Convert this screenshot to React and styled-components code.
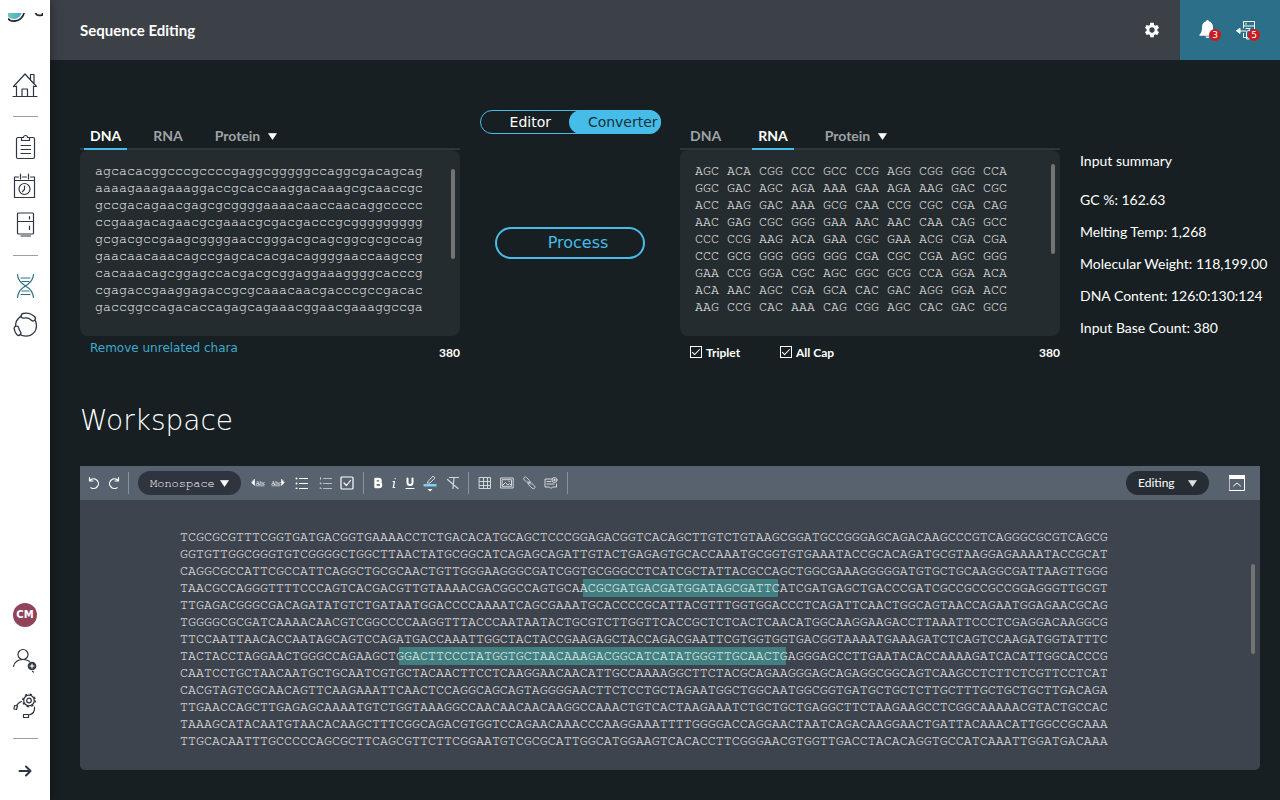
import React from "react";
import styled, { createGlobalStyle, css } from "styled-components";

const lato = `Lato, "Open Sans", sans-serif`;
const dejavu = `"DejaVu Sans", Verdana, sans-serif`;
const mono = `FreeMono, "Liberation Mono", monospace`;

const GlobalStyle = createGlobalStyle`
  *, *::before, *::after { box-sizing: border-box; }
  body { margin: 0; background: #171f22; color: #fff; font-family: ${lato}; }
  button, input, select, textarea { font: inherit; color: inherit; }
  button { background: none; border: 0; padding: 0; cursor: pointer; }
  svg { display: block; flex: none; }
`;

const Page = styled.div`
  display: flex;
  min-height: 100vh;
`;

const Sidebar = styled.nav`
  position: relative;
  z-index: 1;
  flex: 0 0 50px;
  display: flex;
  flex-direction: column;
  justify-content: space-between;
  align-items: center;
  padding: 13px 0 16px;
  background: #fff;
  color: #2f3542;
  box-shadow: 0 0 10px rgba(0, 0, 0, 0.4);
`;

const SideGroup = styled.div`
  display: flex;
  flex-direction: column;
  align-items: center;
  gap: ${(p) => p.$gap}px;
`;

const Logo = styled.a`
  height: 10px;
  margin-bottom: 37px;
`;

const SideLink = styled.a`
  display: grid;
  place-items: center;
  width: 26px;
  height: 26px;
  color: ${(p) => (p.$active ? "#2c7389" : "inherit")};
`;

const SideRule = styled.hr`
  width: 25px;
  margin: ${(p) => p.$space || 0}px 0;
  border: 0;
  border-top: 1px solid #9aa0a8;
`;

const Avatar = styled.button`
  width: 24px;
  height: 24px;
  margin-bottom: 2px;
  border-radius: 50%;
  background: #91435a;
  color: #fff;
  font: 700 10px/24px ${dejavu};
  text-align: center;
`;

const Main = styled.div`
  flex: 1;
  min-width: 0;
`;

const Header = styled.header`
  display: flex;
  align-items: center;
  height: 60px;
  padding-left: 30px;
  background: #3c4047;
`;

const Title = styled.h1`
  flex: 1;
  margin: 0;
  font-size: 15px;
  line-height: 20px;
  font-weight: 700;
`;

const SettingsButton = styled.button`
  display: grid;
  place-items: center;
  width: 56px;
  height: 60px;
`;

const Alerts = styled.div`
  display: flex;
  align-items: center;
  justify-content: center;
  gap: 17px;
  width: 100px;
  height: 60px;
  padding-right: 5px;
  background: #2b7088;
`;

const AlertButton = styled.button`
  position: relative;
  width: 22px;
  height: 22px;
`;

const Badge = styled.span`
  position: absolute;
  right: -2px;
  bottom: 0;
  width: 12px;
  height: 12px;
  border-radius: 50%;
  background: #cb1b20;
  font: 9px/12px ${dejavu};
  text-align: center;
`;

const Converter = styled.section`
  display: grid;
  grid-template-columns: minmax(0, 1fr) 220px minmax(0, 1fr) 220px;
  align-items: start;
  padding: 50px 0 0 30px;
`;

const Panel = styled.div`
  padding-top: 12px;
`;

const Tabs = styled.div`
  display: flex;
  height: 28px;
  padding-left: 4px;
  border-bottom: 2px solid #2e353e;
`;

const Tab = styled.button`
  display: flex;
  align-items: center;
  height: 28px;
  margin-right: ${(p) => p.$after || 0}px;
  padding: 0 6px;
  gap: 8px;
  border-bottom: 2px solid ${(p) => (p.$active ? "#46bde8" : "transparent")};
  color: ${(p) => (p.$active ? "#fff" : "#9fa3a5")};
  font-size: 14px;
  font-weight: 700;
  svg { margin-top: 3px; }
`;

const SequenceBox = styled.div`
  display: flex;
  height: 186px;
  padding: 13px 5px 12px 15px;
  border-radius: 8px;
  background: #242c2f;
`;

const SequenceInput = styled.textarea`
  flex: 1;
  min-width: 0;
  padding: 0;
  border: 0;
  outline: 0;
  resize: none;
  overflow: hidden;
  background: none;
  color: #fff;
  font: 10pt/17px ${mono};
  white-space: pre;
`;

const ScrollThumb = styled.div`
  flex: none;
  width: 4px;
  height: 90px;
  margin-top: ${(p) => p.$top}px;
  border-radius: 2px;
  background: #737373;
`;

const PanelFooter = styled.div`
  display: flex;
  align-items: center;
  height: 32px;
  padding-left: 10px;
  font-size: 12px;
  font-weight: 700;
`;

const RemoveLink = styled.a`
  align-self: flex-start;
  flex: 1;
  margin-top: 3px;
  color: #3fa9cd;
  font: 12px/18px ${dejavu};
  text-decoration: none;
`;

const CheckLabel = styled.label`
  display: flex;
  align-items: center;
  gap: 4px;
  width: 90px;
`;

const Check = styled.input`
  appearance: none;
  width: 12px;
  height: 12px;
  margin: 0;
  border: 1px solid #fff;
  display: grid;
  place-items: center;
  &:checked::after {
    content: "";
    width: 8px;
    height: 4px;
    border: solid #fff;
    border-width: 0 0 1px 1px;
    transform: translateY(-1px) rotate(-45deg);
  }
`;

const Count = styled.output`
  margin-left: auto;
`;

const Middle = styled.div`
  display: flex;
  flex-direction: column;
  align-items: center;
`;

const Switch = styled.div`
  display: grid;
  grid-template-columns: 1fr 1fr;
  width: 181px;
  height: 24px;
  border: 1px solid #46bde8;
  border-radius: 12px;
`;

const SwitchOption = styled.button`
  height: 24px;
  margin: -1px;
  padding-left: ${(p) => (p.$active ? 16 : 10)}px;
  border-radius: 12px;
  font: 14px/24px ${dejavu};
  ${(p) =>
    p.$active &&
    css`
      background: #46bde8;
      color: #17303a;
    `}
`;

const ProcessButton = styled.button`
  width: 150px;
  height: 32px;
  margin-top: 93px;
  padding-left: 16px;
  border: 2px solid #46bde8;
  border-radius: 16px;
  color: #46bde8;
  font: 16px/28px ${dejavu};
`;

const Summary = styled.div`
  padding: 40px 0 0 20px;
  font-size: 14px;
  line-height: 22px;
  white-space: nowrap;
`;

const SummaryTitle = styled.h2`
  margin: 0 0 17px;
  font: inherit;
`;

const SummaryList = styled.ul`
  display: grid;
  gap: 10px;
  margin: 0;
  padding: 0;
  list-style: none;
`;

const Workspace = styled.section`
  padding: 0 20px 30px 30px;
`;

const WorkspaceTitle = styled.h2`
  margin: 34px 0 26px;
  font: 200 28px/38px ${dejavu};
`;

const Toolbar = styled.div`
  display: flex;
  align-items: center;
  height: 34px;
  padding: 0 15px 0 4px;
  background: #58616e;
`;

const Tool = styled.button`
  display: grid;
  place-items: center;
  width: ${(p) => p.$w || 22}px;
  height: 22px;
  color: ${(p) => (p.$bright ? "#fff" : "#d3d6da")};
`;

const ToolRule = styled.span`
  width: 1px;
  height: 22px;
  margin: 0 ${(p) => p.$after || 0}px 0 ${(p) => p.$before || 0}px;
  background: #8b919b;
`;

const Picker = styled.span`
  display: grid;
  align-items: center;
  width: ${(p) => p.$w}px;
  height: 24px;
  margin-right: ${(p) => p.$after}px;
  border-radius: 12px;
  background: ${(p) => p.$bg};
  > * { grid-area: 1 / 1; }
  > svg { justify-self: end; margin-right: 12px; pointer-events: none; }
`;

const PickerSelect = styled.select`
  appearance: none;
  width: 100%;
  height: 24px;
  padding: 0 0 0 12px;
  border: 0;
  border-radius: 12px;
  outline: 0;
  background: none;
  color: #fff;
  font: ${(p) => (p.$mono ? `12px/24px ${mono}` : `12px/24px ${lato}`)};
`;

const Spacer = styled.span`
  flex: 1;
`;

const Sheet = styled.div`
  display: flex;
  justify-content: space-between;
  height: 270px;
  padding: 29px 5px 0 100px;
  border-radius: 0 0 5px 5px;
  background: #3e444d;
`;

const SheetText = styled.div`
  color: #fff;
  font: 10pt/17px ${mono};
  white-space: pre;
  outline: 0;
`;

const SheetLine = styled.div`
  position: relative;
  z-index: 0;
`;

const Highlight = styled.mark`
  position: absolute;
  z-index: -1;
  top: -1px;
  left: ${(p) => p.$from}px;
  width: ${(p) => p.$width}px;
  height: 18px;
  background: #417f80;
`;

const Svg = ({ size = 26, w = size, h = size, children, stroke = 1.2 }) => (
  <svg
    width={w}
    height={h}
    viewBox={`0 0 ${w} ${h}`}
    fill="none"
    stroke="currentColor"
    strokeWidth={stroke}
    strokeLinecap="round"
    strokeLinejoin="round"
    aria-hidden="true"
  >
    {children}
  </svg>
);

const Caret = ({ color = "#fff" }) => (
  <svg width="9" height="7" viewBox="0 0 9 7" aria-hidden="true">
    <path d="M0.5 0.5h8L4.5 6.5z" fill={color} stroke={color} strokeLinejoin="round" strokeWidth=".6" />
  </svg>
);

const LogoMark = () => (
  <svg width="35" height="10" viewBox="0 0 35 10" aria-hidden="true">
    <defs>
      <linearGradient id="logo" x1="0" x2="1">
        <stop offset="0" stopColor="#6cc9b0" />
        <stop offset="1" stopColor="#46a9d8" />
      </linearGradient>
    </defs>
    <path d="M0 0H13.500C12.500 3.500 9.500 6 6 6C3.500 6 1.200 5 0 3.500z" fill="url(#logo)" />
    <path d="M0 5.500C1.500 7.500 4 8.400 7 8C11.500 7.500 15.500 4 16 0" fill="none" stroke="#2b2a33" strokeWidth="1.800" />
    <path d="M27.500 0C28.500 2.600 31 3 34.500 1.800M34.500 0V3" fill="none" stroke="#2b2a33" strokeWidth="1.800" />
  </svg>
);

const HomeIcon = () => (
  <Svg>
    <path d="M1 23.500h24M4.500 23.500V13M21.500 23.500V13M1.500 13.500L13 1l11.500 12.500H21.500M1.500 13.500h3M10 23.500v-7.500h5.500v7.500M18.500 6V1.500h3.500v9" />
  </Svg>
);
const ClipboardIcon = () => (
  <Svg>
    <path d="M9 3.500H6a1.500 1.500 0 0 0-1.500 1.500v18A1.500 1.500 0 0 0 6 24.500h15a1.500 1.500 0 0 0 1.500-1.500V5A1.500 1.500 0 0 0 21 3.500h-3M9.500 3.500h2a2 2 0 0 1 4 0h2v3h-8zM9 11.500h9.500M9 15.500h9.500M9 19.500h9.500" />
  </Svg>
);
const CalendarIcon = () => (
  <Svg>
    <path d="M6.500 4H2.500v20.500h20V4h-4M10.500 4h4M2.500 7.500h20M8.500 1v5M16.500 1v5" />
    <circle cx="12.500" cy="16" r="5.500" />
    <path d="M12.500 13V16.500l-2 2" />
  </Svg>
);
const FridgeIcon = () => (
  <Svg>
    <rect x="5.500" y="1" width="16" height="21" rx="1" />
    <path d="M5.500 9.500h16M17.500 4.500v2.500M17.500 14v3.500M9 24h9.500" />
  </Svg>
);
const DnaIcon = () => (
  <Svg>
    <path d="M5.500 1.500C6 9 11 11 13.500 13C18 15.500 21 19 21.500 24.500M21.500 1.500C21 9 16 11 13.500 13C9 15.500 6 19 5.500 24.500M9 5h9M10 8.500h7M10 18h7M9 21.500h9" />
  </Svg>
);
const PlasmidIcon = () => (
  <Svg>
    <circle cx="14" cy="13.700" r="10.500" />
    <path d="M11.500 3.800A10.500 10.500 0 0 1 21 6.500M4.500 16.500A10.500 10.500 0 0 0 6.500 21" strokeWidth="6" />
    <path d="M11.500 3.800A10.500 10.500 0 0 1 21 6.500M4.500 16.500A10.500 10.500 0 0 0 6.500 21" stroke="#fff" strokeWidth="3.400" />
  </Svg>
);
const AddUserIcon = () => (
  <Svg>
    <circle cx="11" cy="6.500" r="5" />
    <path d="M1.500 18.500C2.500 14 6 11.500 11 11.500c3 0 5 .8 6.500 2" />
    <circle cx="20" cy="18" r="4.300" fill="currentColor" stroke="none" />
    <path d="M20 16v4M18 18h4" stroke="#fff" />
    <path d="M20.500 23.500l1 .5" />
  </Svg>
);
const SupportIcon = () => (
  <Svg>
    <circle cx="17" cy="7.500" r="5.300" />
    <circle cx="17" cy="7.500" r="6.200" strokeWidth="1.500" strokeDasharray="2.200 2.670" strokeLinecap="butt" />
    <circle cx="17" cy="7.500" r="2.300" />
    <path d="M9.500 8.500C6.500 9.500 5 11.500 4.500 13M2.500 12.500l3 .5-1 3.500-2.500-.5zM22.500 14c.5 4-2 7-5.500 8M11.500 21.500h5v3h-5z" />
  </Svg>
);
const ArrowIcon = () => (
  <Svg size={14} stroke={2}>
    <path d="M1.500 7h11M8 2.500L12.500 7 8 11.500" />
  </Svg>
);

const GearIcon = () => (
  <svg width="18" height="18" viewBox="0 0 24 24" fill="#fff" aria-hidden="true">
    <path d="M19.140 12.940c.04-.3.060-.61.060-.94 0-.32-.02-.64-.07-.94l2.030-1.580a.49.49 0 0 0 .12-.61l-1.920-3.320a.488.488 0 0 0-.59-.22l-2.390.96c-.5-.38-1.030-.7-1.620-.94l-.36-2.540a.484.484 0 0 0-.48-.41h-3.840c-.24 0-.43.170-.47.410l-.36 2.540c-.59.240-1.130.570-1.620.940l-2.390-.96c-.22-.08-.47 0-.59.220L2.740 8.870c-.12.210-.08.470.120.610l2.030 1.580c-.05.300-.09.630-.09.940s.020.640.070.940l-2.030 1.580a.49.49 0 0 0-.12.610l1.920 3.320c.12.220.370.290.590.220l2.390-.96c.500.380 1.030.700 1.620.940l.360 2.540c.05.240.240.410.480.410h3.840c.240 0 .440-.17.470-.41l.360-2.540c.590-.24 1.130-.56 1.620-.94l2.390.960c.220.080.470 0 .590-.22l1.920-3.320a.49.49 0 0 0-.12-.61zM12 15.600c-1.980 0-3.600-1.620-3.600-3.600s1.620-3.600 3.600-3.600 3.600 1.620 3.600 3.600-1.620 3.600-3.600 3.600z" />
  </svg>
);
const BellIcon = () => (
  <svg width="22" height="22" viewBox="0 0 22 22" fill="#fff" aria-hidden="true">
    <path d="M10.500 1c-.8 0-1.300.6-1.300 1.300C6.500 3 5 5.500 5 8c0 4.500-1 6.500-2.500 7.500v1.200h16v-1.200C17 14.500 16 12.500 16 8c0-2.500-1.500-5-4.200-5.700 0-.7-.5-1.300-1.300-1.300zM8.500 17.500h4a2 1.500 0 0 1-4 0z" />
  </svg>
);
const TransferIcon = () => (
  <Svg size={22} stroke={1}>
    <path d="M7.500 9V2.500h11V18M7.500 7h11M10 4v1.500M1 12h9M10 9.500h4M7.500 14.500v4h4M13.500 11v9h-3v-7z" />
    <path d="M4 9.500v5L.8 12z" fill="currentColor" />
  </Svg>
);

const rna = `AGC ACA CGG CCC GCC CCG AGG CGG GGG CCA
GGC GAC AGC AGA AAA GAA AGA AAG GAC CGC
ACC AAG GAC AAA GCG CAA CCG CGC CGA CAG
AAC GAG CGC GGG GAA AAC AAC CAA CAG GCC
CCC CCG AAG ACA GAA CGC GAA ACG CGA CGA
CCC GCG GGG GGG GGG CGA CGC CGA AGC GGG
GAA CCG GGA CGC AGC GGC GCG CCA GGA ACA
ACA AAC AGC CGA GCA CAC GAC AGG GGA ACC
AAG CCG CAC AAA CAG CGG AGC CAC GAC GCG`;

const dna = `agcacacggcccgccccgaggcgggggccaggcgacagcag
aaaagaaagaaaggaccgcaccaaggacaaagcgcaaccgc
gccgacagaacgagcgcggggaaaacaaccaacaggccccc
ccgaagacagaacgcgaaacgcgacgacccgcggggggggg
gcgacgccgaagcggggaaccgggacgcagcggcgcgccag
gaacaacaaacagccgagcacacgacaggggaaccaagccg
cacaaacagcggagccacgacgcggaggaaaggggcacccg
cgagaccgaaggagaccgcgcaaacaacgacccgccgacac
gaccggccagacaccagagcagaaacggaacgaaaggccga`;

const lines = [
  { text: "TCGCGCGTTTCGGTGATGACGGTGAAAACCTCTGACACATGCAGCTCCCGGAGACGGTCACAGCTTGTCTGTAAGCGGATGCCGGGAGCAGACAAGCCCGTCAGGGCGCGTCAGCG" },
  { text: "GGTGTTGGCGGGTGTCGGGGCTGGCTTAACTATGCGGCATCAGAGCAGATTGTACTGAGAGTGCACCAAATGCGGTGTGAAATACCGCACAGATGCGTAAGGAGAAAATACCGCAT" },
  { text: "CAGGCGCCATTCGCCATTCAGGCTGCGCAACTGTTGGGAAGGGCGATCGGTGCGGGCCTCATCGCTATTACGCCAGCTGGCGAAAGGGGGATGTGCTGCAAGGCGATTAAGTTGGG" },
  { text: "TAACGCCAGGGTTTTCCCAGTCACGACGTTGTAAAACGACGGCCAGTGCAACGCGATGACGATGGATAGCGATTCATCGATGAGCTGACCCGATCGCCGCCGCCGGAGGGTTGCGT", mark: [403, 195] },
  { text: "TTGAGACGGGCGACAGATATGTCTGATAATGGACCCCAAAATCAGCGAAATGCACCCCGCATTACGTTTGGTGGACCCTCAGATTCAACTGGCAGTAACCAGAATGGAGAACGCAG" },
  { text: "TGGGGCGCGATCAAAACAACGTCGGCCCCAAGGTTTACCCAATAATACTGCGTCTTGGTTCACCGCTCTCACTCAACATGGCAAGGAAGACCTTAAATTCCCTCGAGGACAAGGCG" },
  { text: "TTCCAATTAACACCAATAGCAGTCCAGATGACCAAATTGGCTACTACCGAAGAGCTACCAGACGAATTCGTGGTGGTGACGGTAAAATGAAAGATCTCAGTCCAAGATGGTATTTC" },
  { text: "TACTACCTAGGAACTGGGCCAGAAGCTGGACTTCCCTATGGTGCTAACAAAGACGGCATCATATGGGTTGCAACTGAGGGAGCCTTGAATACACCAAAAGATCACATTGGCACCCG", mark: [219, 387] },
  { text: "CAATCCTGCTAACAATGCTGCAATCGTGCTACAACTTCCTCAAGGAACAACATTGCCAAAAGGCTTCTACGCAGAAGGGAGCAGAGGCGGCAGTCAAGCCTCTTCTCGTTCCTCAT" },
  { text: "CACGTAGTCGCAACAGTTCAAGAAATTCAACTCCAGGCAGCAGTAGGGGAACTTCTCCTGCTAGAATGGCTGGCAATGGCGGTGATGCTGCTCTTGCTTTGCTGCTGCTTGACAGA" },
  { text: "TTGAACCAGCTTGAGAGCAAAATGTCTGGTAAAGGCCAACAACAACAAGGCCAAACTGTCACTAAGAAATCTGCTGCTGAGGCTTCTAAGAAGCCTCGGCAAAAACGTACTGCCAC" },
  { text: "TAAAGCATACAATGTAACACAAGCTTTCGGCAGACGTGGTCCAGAACAAACCCAAGGAAATTTTGGGGACCAGGAACTAATCAGACAAGGAACTGATTACAAACATTGGCCGCAAA" },
  { text: "TTGCACAATTTGCCCCCAGCGCTTCAGCGTTCTTCGGAATGTCGCGCATTGGCATGGAAGTCACACCTTCGGGAACGTGGTTGACCTACACAGGTGCCATCAAATTGGATGACAAA" },
];

const summary = [
  "GC %: 162.63",
  "Melting Temp: 1,268",
  "Molecular Weight: 118,199.00",
  "DNA Content: 126:0:130:124",
  "Input Base Count: 380",
];

const smallText = { fontFamily: "Liberation Serif, serif", fontSize: 6, fontWeight: 400 };

const FormatTools = () => (
  <>
    <Tool $w={20} $bright aria-label="Previous word">
      <Svg w={14} h={12} stroke={0.6}>
        <path d="M3.500 2.500v6L.8 5.500z" fill="currentColor" />
        <text x="4.500" y="7.500" fill="currentColor" stroke="none" {...smallText}>Abc</text>
        <path d="M5 8.800h8" />
      </Svg>
    </Tool>
    <Tool $w={20} $bright aria-label="Next word">
      <Svg w={14} h={12} stroke={0.6}>
        <path d="M10.500 2.500v6l2.700-3z" fill="currentColor" />
        <text x="0" y="7.500" fill="currentColor" stroke="none" {...smallText}>Abc</text>
        <path d="M1 8.800h8" />
      </Svg>
    </Tool>
    <Tool $w={27} $bright aria-label="Bulleted list">
      <Svg w={13} h={12} stroke={1}>
        <path d="M4.500 1.500h8M4.500 6.500h8M4.500 11.500h8" />
        <path d="M1.500 1.500v0M1.500 6.500v0M1.500 11.500v0" strokeWidth="2" />
      </Svg>
    </Tool>
    <Tool $w={20} aria-label="Numbered list">
      <Svg w={13} h={12} stroke={1}>
        <path d="M4.500 1.500h8M4.500 6.500h8M4.500 11.500h8" opacity=".8" />
        <path d="M1.500 .8v1.400M1 6h1v1M1 11h1v.5" />
      </Svg>
    </Tool>
    <Tool $w={24} $bright aria-label="Checklist">
      <Svg size={14}>
        <rect x="1" y="1" width="12" height="12" rx="1" />
        <path d="M4 7l2.500 2.500L10.500 4.500" />
      </Svg>
    </Tool>
  </>
);

export default function App() {
  return (
    <Page>
      <GlobalStyle />
      <Sidebar aria-label="Main">
        <SideGroup $gap={13}>
          <Logo href="#" aria-label="Start"><LogoMark /></Logo>
          <SideLink href="#" aria-label="Home"><HomeIcon /></SideLink>
          <SideRule $space={4} />
          <SideLink href="#" aria-label="Tasks"><ClipboardIcon /></SideLink>
          <SideLink href="#" aria-label="Schedule"><CalendarIcon /></SideLink>
          <SideLink href="#" aria-label="Storage"><FridgeIcon /></SideLink>
          <SideRule $space={4} />
          <SideLink href="#" aria-label="Sequences" $active><DnaIcon /></SideLink>
          <SideLink href="#" aria-label="Plasmids"><PlasmidIcon /></SideLink>
        </SideGroup>
        <SideGroup $gap={19}>
          <Avatar>CM</Avatar>
          <SideLink href="#" aria-label="Add user"><AddUserIcon /></SideLink>
          <SideLink href="#" aria-label="Support"><SupportIcon /></SideLink>
          <SideRule />
          <SideLink href="#" aria-label="Expand"><ArrowIcon /></SideLink>
        </SideGroup>
      </Sidebar>
      <Main>
        <Header>
          <Title>Sequence Editing</Title>
          <SettingsButton aria-label="Settings"><GearIcon /></SettingsButton>
          <Alerts>
            <AlertButton aria-label="Notifications"><BellIcon /><Badge>3</Badge></AlertButton>
            <AlertButton aria-label="Transfers"><TransferIcon /><Badge>5</Badge></AlertButton>
          </Alerts>
        </Header>

        <Converter>
          <Panel>
            <Tabs>
              <Tab $active $after={20}>DNA</Tab>
              <Tab $after={20}>RNA</Tab>
              <Tab>Protein <Caret /></Tab>
            </Tabs>
            <SequenceBox>
              <SequenceInput aria-label="Input sequence" defaultValue={dna} />
              <ScrollThumb $top={6} />
            </SequenceBox>
            <PanelFooter>
              <RemoveLink href="#">Remove unrelated chara</RemoveLink>
              <Count>380</Count>
            </PanelFooter>
          </Panel>
          <Middle>
            <Switch>
              <SwitchOption>Editor</SwitchOption>
              <SwitchOption $active>Converter</SwitchOption>
            </Switch>
            <ProcessButton>Process</ProcessButton>
          </Middle>
          <Panel>
            <Tabs>
              <Tab $after={25}>DNA</Tab>
              <Tab $active $after={25}>RNA</Tab>
              <Tab>Protein <Caret /></Tab>
            </Tabs>
            <SequenceBox>
              <SequenceInput aria-label="Output sequence" readOnly value={rna} />
              <ScrollThumb $top={1} />
            </SequenceBox>
            <PanelFooter>
              <CheckLabel><Check type="checkbox" defaultChecked />Triplet</CheckLabel>
              <CheckLabel><Check type="checkbox" defaultChecked />All Cap</CheckLabel>
              <Count>380</Count>
            </PanelFooter>
          </Panel>
          <Summary>
            <SummaryTitle>Input summary</SummaryTitle>
            <SummaryList>
              {summary.map((item) => <li key={item}>{item}</li>)}
            </SummaryList>
          </Summary>
        </Converter>

        <Workspace>
          <WorkspaceTitle>Workspace</WorkspaceTitle>
          <Toolbar role="toolbar" aria-label="Formatting">
            <Tool $w={20} $bright aria-label="Undo">
              <Svg size={14}><path d="M2.500 1.500v3.500h3.500M3 4.500a4.800 4.800 0 1 1 1 7.200" /></Svg>
            </Tool>
            <Tool $w={20} $bright aria-label="Redo">
              <Svg size={14}><path d="M11.500 1.500v3.500H8M11 4.500a4.800 4.800 0 1 0-1 7.200" /></Svg>
            </Tool>
            <ToolRule $before={4} $after={9} />
            <Picker $w={103} $bg="#2f343e" $after={7}>
              <PickerSelect $mono aria-label="Font"><option>Monospace</option></PickerSelect>
              <Caret />
            </Picker>
            <FormatTools />
            <ToolRule $before={4} $after={6} />
            <Tool $w={16} $bright aria-label="Bold">
              <Svg w={10} h={12} stroke={2.400}><path d="M2.500 2h3a2 1.800 0 0 1 0 3.800h-3zM2.500 5.800h3.500a2 2 0 0 1 0 4.200h-3.500z" /></Svg>
            </Tool>
            <Tool $w={16} $bright aria-label="Italic">
              <Svg w={6} h={12}><path d="M3.500 4.500h-1.500M3.500 4.500L2.200 10.500h1.500M4.200 1.500v.2" /></Svg>
            </Tool>
            <Tool $w={16} $bright aria-label="Underline">
              <Svg w={10} h={12} stroke={2}><path d="M2.500 1.500v4a2.500 2.500 0 0 0 5 0v-4" /><path d="M1 11.500h8" strokeWidth="1" /></Svg>
            </Tool>
            <Tool $w={24} aria-label="Highlight">
              <Svg w={14} h={18} stroke={1}>
                <path d="M5 7.500L10 2l2 2-5 5H4.500z" />
                <path d="M0.500 10h13v2.500H.5z" fill="#7fd0ee" stroke="none" />
                <path d="M4.500 15h5L7 17.500z" fill="#fff" stroke="none" />
              </Svg>
            </Tool>
            <Tool aria-label="Clear formatting">
              <Svg size={14}><path d="M3.500 1.500h9M8 1.500L7 12.500M1.500 3.500l10.500 9" /></Svg>
            </Tool>
            <ToolRule $before={4} $after={5} />
            <Tool aria-label="Insert table">
              <Svg size={14} stroke={1}><path d="M1.500 1.500h11v11h-11zM1.500 5.500h11M1.500 9.500h11M5.500 1.500v11M9.500 1.500v11" /></Svg>
            </Tool>
            <Tool aria-label="Insert image">
              <Svg size={14} stroke={1}><path d="M.8 2h12.400v10H.8zM2.500 3.700h9v6.600h-9zM2.500 9.500l3-3 2.500 2.500 1.500-1.500 2 2M8.800 5.500h.5" /></Svg>
            </Tool>
            <Tool aria-label="Insert link">
              <Svg size={14} stroke={0.9}>
                <path d="M2.200 3.800a1.600 1.600 0 0 1 2.300-2.300l3 3a1.600 1.600 0 0 1-2.300 2.300zM6.700 8.800A1.600 1.600 0 0 1 9 6.500l3.500 3.500a1.600 1.600 0 0 1-2.300 2.300zM5.500 5l3.500 3.500" />
              </Svg>
            </Tool>
            <Tool aria-label="Insert comment">
              <Svg size={14} stroke={1}><path d="M8 3H1v8h4.500L7 12.500 8.500 11h4V8M3 5.500h4M3 8h7" /><circle cx="10.500" cy="4" r="2.500" /><path d="M10.500 3v2M9.500 4h2" /></Svg>
            </Tool>
            <ToolRule $before={5} />
            <Spacer />
            <Picker $w={83} $bg="#272d34" $after={20}>
              <PickerSelect aria-label="Mode"><option>Editing</option></PickerSelect>
              <Caret color="#dfe1e3" />
            </Picker>
            <Tool $w={16} $bright aria-label="Collapse">
              <Svg size={16} stroke={1}><path d="M.5.5h15v15H.5z" /><path d="M.5.5h15v3H.5z" fill="currentColor" /><path d="M4.500 11L8 8l3.500 3" /></Svg>
            </Tool>
          </Toolbar>
          <Sheet>
            <SheetText role="textbox" aria-multiline="true" aria-label="Workspace sequence">
              {lines.map((line) => (
                <SheetLine key={line.text}>
                  {line.mark && <Highlight $from={line.mark[0]} $width={line.mark[1]} />}
                  {line.text}
                </SheetLine>
              ))}
            </SheetText>
            <ScrollThumb $top={35} />
          </Sheet>
        </Workspace>
      </Main>
    </Page>
  );
}
